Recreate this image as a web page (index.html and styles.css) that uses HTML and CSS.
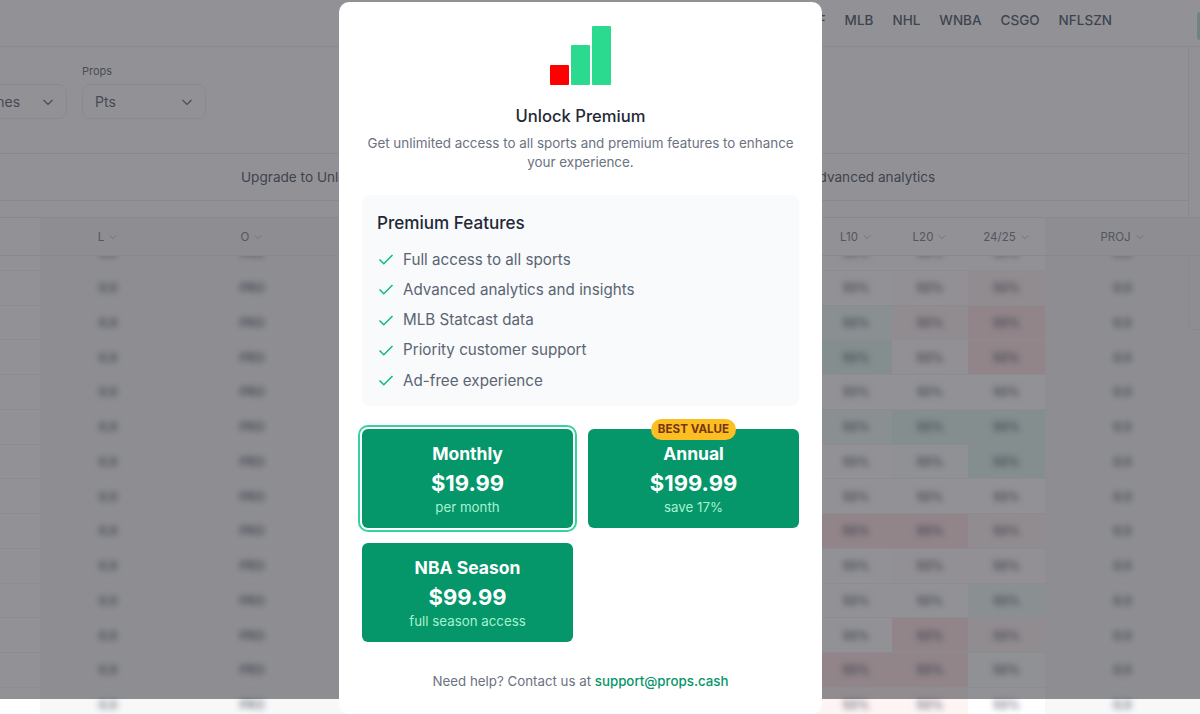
FILE: index.html
```html
<!DOCTYPE html>
<html lang="en">
<head>
  <meta charset="UTF-8">
  <meta name="viewport" content="width=device-width, initial-scale=1.0">
  <title>Unlock Premium</title>
  <link rel="stylesheet" href="styles.css">
</head>
<body>
  <div class="page">
    <header class="topbar">
      <nav class="sports">
        <a>NBA</a>
        <a>GOLF</a>
        <a>MLB</a>
        <a>NHL</a>
        <a>WNBA</a>
        <a>CSGO</a>
        <a>NFLSZN</a>
      </nav>
      <div class="account"></div>
    </header>

    <div class="filters">
      <div class="filter filter-lines">
        <div class="select">Lines <svg class="chev" viewBox="0 0 12 12"><path d="M1.5 4l4.5 4.5L10.500 4"/></svg></div>
      </div>
      <div class="filter">
        <label>Props</label>
        <div class="select">Pts <svg class="chev" viewBox="0 0 12 12"><path d="M1.5 4l4.5 4.5L10.500 4"/></svg></div>
      </div>
    </div>

    <div class="upgrade-banner">Upgrade to Unlock all sports, MLB Statcast data, player projections, hit rates, trends and advanced analytics</div>

    <div class="stats">
      <div class="stats-head">
        <div class="corner"></div>
        <div class="th shade">L <svg class="chev" viewBox="0 0 12 12"><path d="M2 4l4 4 4-4"/></svg></div>
        <div class="th shade">O <svg class="chev" viewBox="0 0 12 12"><path d="M2 4l4 4 4-4"/></svg></div>
        <div class="th shade"></div>
        <div class="th">L10 <svg class="chev" viewBox="0 0 12 12"><path d="M2 4l4 4 4-4"/></svg></div>
        <div class="th">L20 <svg class="chev" viewBox="0 0 12 12"><path d="M2 4l4 4 4-4"/></svg></div>
        <div class="th">24/25 <svg class="chev" viewBox="0 0 12 12"><path d="M2 4l4 4 4-4"/></svg></div>
        <div class="th shade">PROJ <svg class="chev" viewBox="0 0 12 12"><path d="M2 4l4 4 4-4"/></svg></div>
      </div>
      <div class="stats-body">
        <div class="row"><i></i><b class="shade">0.0</b><b class="shade">PRO</b><b class="shade"></b><b>50%</b><b>50%</b><b>50%</b><b class="shade">0.0</b></div>
        <div class="row"><i></i><b class="shade">0.0</b><b class="shade">PRO</b><b class="shade"></b><b>50%</b><b class="red-0">50%</b><b class="red-1">50%</b><b class="shade">0.0</b></div>
        <div class="row"><i></i><b class="shade">0.0</b><b class="shade">PRO</b><b class="shade"></b><b class="green-1">50%</b><b class="red-1">50%</b><b class="red-2">50%</b><b class="shade">0.0</b></div>
        <div class="row"><i></i><b class="shade">0.0</b><b class="shade">PRO</b><b class="shade"></b><b class="green-2">50%</b><b class="red-0">50%</b><b class="red-2">50%</b><b class="shade">0.0</b></div>
        <div class="row"><i></i><b class="shade">0.0</b><b class="shade">PRO</b><b class="shade"></b><b>50%</b><b>50%</b><b>50%</b><b class="shade">0.0</b></div>
        <div class="row"><i></i><b class="shade">0.0</b><b class="shade">PRO</b><b class="shade"></b><b class="green-1">50%</b><b class="green-2">50%</b><b class="green-2">50%</b><b class="shade">0.0</b></div>
        <div class="row"><i></i><b class="shade">0.0</b><b class="shade">PRO</b><b class="shade"></b><b>50%</b><b class="green-0">50%</b><b class="green-2">50%</b><b class="shade">0.0</b></div>
        <div class="row"><i></i><b class="shade">0.0</b><b class="shade">PRO</b><b class="shade"></b><b>50%</b><b>50%</b><b>50%</b><b class="shade">0.0</b></div>
        <div class="row"><i></i><b class="shade">0.0</b><b class="shade">PRO</b><b class="shade"></b><b class="red-2">50%</b><b class="red-2">50%</b><b class="red-1">50%</b><b class="shade">0.0</b></div>
        <div class="row"><i></i><b class="shade">0.0</b><b class="shade">PRO</b><b class="shade"></b><b>50%</b><b class="red-0">50%</b><b class="red-0">50%</b><b class="shade">0.0</b></div>
        <div class="row"><i></i><b class="shade">0.0</b><b class="shade">PRO</b><b class="shade"></b><b>50%</b><b>50%</b><b class="green-1">50%</b><b class="shade">0.0</b></div>
        <div class="row"><i></i><b class="shade">0.0</b><b class="shade">PRO</b><b class="shade"></b><b>50%</b><b class="red-2">50%</b><b class="red-1">50%</b><b class="shade">0.0</b></div>
        <div class="row"><i></i><b class="shade">0.0</b><b class="shade">PRO</b><b class="shade"></b><b class="red-2">50%</b><b class="red-2">50%</b><b class="green-0">50%</b><b class="shade">0.0</b></div>
        <div class="row"><i></i><b class="shade">0.0</b><b class="shade">PRO</b><b class="shade"></b><b class="red-1">50%</b><b class="red-1">50%</b><b>50%</b><b class="shade">0.0</b></div>
      </div>
    </div>

    <div class="side-panel"></div>
  </div>

  <div class="overlay"></div>

  <div class="modal-layer">
    <div class="modal">
      <svg class="logo" width="61" height="59" viewBox="0 0 61 59">
        <rect x="0" y="39" width="19" height="20" rx="1" fill="#ff0000"/>
        <rect x="21" y="19" width="19" height="40" rx="1" fill="#2bd98f"/>
        <rect x="42" y="0" width="19" height="59" rx="1" fill="#2bd98f"/>
      </svg>
      <h2 class="modal-title">Unlock Premium</h2>
      <p class="modal-text">Get unlimited access to all sports and premium features to enhance your experience.</p>

      <div class="features">
        <h3>Premium Features</h3>
        <ul>
          <li><svg class="check" viewBox="0 0 16 16"><path d="M1.500 8.500l4.300 4.300L14.500 4"/></svg>Full access to all sports</li>
          <li><svg class="check" viewBox="0 0 16 16"><path d="M1.500 8.500l4.300 4.300L14.500 4"/></svg>Advanced analytics and insights</li>
          <li><svg class="check" viewBox="0 0 16 16"><path d="M1.500 8.500l4.300 4.300L14.500 4"/></svg>MLB Statcast data</li>
          <li><svg class="check" viewBox="0 0 16 16"><path d="M1.500 8.500l4.300 4.300L14.500 4"/></svg>Priority customer support</li>
          <li><svg class="check" viewBox="0 0 16 16"><path d="M1.500 8.500l4.300 4.300L14.500 4"/></svg>Ad-free experience</li>
        </ul>
      </div>

      <div class="plans">
        <button class="plan selected">
          <span class="plan-name">Monthly</span>
          <span class="plan-price">$19.99</span>
          <span class="plan-note">per month</span>
        </button>
        <button class="plan">
          <span class="badge">BEST VALUE</span>
          <span class="plan-name">Annual</span>
          <span class="plan-price">$199.99</span>
          <span class="plan-note">save 17%</span>
        </button>
        <button class="plan">
          <span class="plan-name">NBA Season</span>
          <span class="plan-price">$99.99</span>
          <span class="plan-note">full season access</span>
        </button>
      </div>

      <p class="help">Need help? Contact us at <a href="#">support@props.cash</a></p>
    </div>
  </div>
</body>
</html>
```

FILE: styles.css
```css
* {
  box-sizing: border-box;
}

body {
  margin: 0;
  height: 714px;
  overflow: hidden;
  font-family: Inter, "Noto Sans", sans-serif;
  background-color: #ffffff;
  color: #1f2937;
}

.page {
  position: relative;
  z-index: 0;
  height: 714px;
  overflow: hidden;
}

.chev {
  fill: none;
  stroke: currentColor;
  stroke-width: 1.2;
}

/* top bar */
.topbar {
  height: 47px;
  display: flex;
  justify-content: flex-end;
  border-bottom: 1px solid #eef0f2;
  overflow: hidden;
}

.sports {
  display: flex;
  align-items: center;
  gap: 19px;
  height: 40px;
  font-size: 13.5px;
  font-weight: 500;
  color: #66707e;
  margin-right: 85px;
}

.account {
  width: 3px;
  height: 28px;
  margin-top: 12px;
  background-color: #bfe6d5;
  border-radius: 4px 0 0 4px;
}

/* filters */
.filters {
  height: 106px;
  width: 1188px;
  display: flex;
  align-items: flex-end;
  gap: 15px;
  padding-bottom: 34px;
}

.filter label {
  display: block;
  font-size: 11px;
  line-height: 14px;
  color: #7b818c;
  margin-bottom: 6px;
}

.filter-lines {
  margin-left: -28px;
}

.select {
  width: 124px;
  height: 35px;
  padding: 0 12px;
  display: flex;
  justify-content: space-between;
  align-items: center;
  border: 1px solid #eef0f2;
  border-radius: 8px;
  font-size: 14px;
  color: #737a87;
}

.filter-lines .select {
  width: 95px;
}

.select .chev {
  width: 12px;
  height: 12px;
}

.upgrade-banner {
  width: 1188px;
  height: 48px;
  border-top: 1px solid #eceef1;
  border-bottom: 1px solid #eceef1;
  padding-left: 241px;
  display: flex;
  align-items: center;
  font-size: 13.6px;
  color: #666d7a;
  white-space: nowrap;
}

/* stats table */
.stats {
  margin-top: 16px;
  border-top: 1px solid #eceef1;
}

.stats-head,
.row {
  display: grid;
  grid-template-columns: 40px 136px 152px 492px 72px 76px 77px 155px;
}

.stats-head {
  position: relative;
  z-index: 1;
  height: 38px;
  background-color: #ffffff;
  border-bottom: 1px solid #eceef1;
}

.th {
  display: flex;
  align-items: center;
  justify-content: center;
  gap: 4px;
  font-size: 11.5px;
  color: #8b9099;
}

.th .chev {
  width: 10px;
  height: 10px;
  color: #c7cad0;
}

.shade {
  background-color: #f7f8f8;
}

.stats-body {
  margin-top: -20px;
}

.row {
  height: 34.75px;
  border-bottom: 1px solid #f2f3f5;
}

.row b {
  display: flex;
  align-items: center;
  justify-content: center;
  font-size: 12px;
  font-weight: 500;
  color: transparent;
  text-shadow: 0 0 6px #5b6270;
}

.red-0 { background-color: rgba(239, 68, 68, 0.025); }
.red-1 { background-color: rgba(239, 68, 68, 0.06); }
.red-2 { background-color: rgba(239, 68, 68, 0.13); }
.green-0 { background-color: rgba(16, 185, 129, 0.025); }
.green-1 { background-color: rgba(16, 185, 129, 0.06); }
.green-2 { background-color: rgba(16, 185, 129, 0.11); }

.side-panel {
  position: absolute;
  top: 47px;
  left: 1188px;
  width: 30px;
  height: 283px;
  border-left: 1px solid #eceef1;
  border-bottom: 1px solid #eceef1;
  border-bottom-left-radius: 6px;
}

/* modal */
.overlay {
  position: fixed;
  z-index: 1;
  top: 0;
  left: 0;
  right: 0;
  height: 699px;
  background-color: rgba(17, 17, 27, 0.46);
}

.modal-layer {
  position: fixed;
  z-index: 2;
  inset: 0;
  padding: 2px 0 0 339px;
}

.modal {
  width: 483px;
  height: 712px;
  padding: 24px 23px 0;
  background-color: #ffffff;
  border-radius: 10px;
  display: flex;
  flex-direction: column;
  align-items: center;
}

.logo {
  display: block;
}

.modal-title {
  margin: 19px 0 0;
  font-size: 16.600px;
  line-height: 24px;
  font-weight: 500;
  color: #1f2937;
}

.modal-text {
  margin: 6px 0 0;
  width: 437px;
  text-align: center;
  font-size: 13.4px;
  line-height: 19px;
  color: #6b7280;
}

.features {
  align-self: stretch;
  height: 211px;
  margin-top: 23px;
  padding: 16px 15px 0;
  background-color: #f8fafc;
  border-radius: 8px;
}

.features h3 {
  margin: 0;
  font-size: 17.100px;
  line-height: 24px;
  font-weight: 500;
  color: #1f2937;
}

.features ul {
  list-style: none;
  margin: 9px 0 0;
  padding: 0;
}

.features li {
  display: flex;
  align-items: center;
  height: 30.250px;
  font-size: 15.200px;
  color: #5b6472;
}

.check {
  width: 16px;
  height: 16px;
  margin: 0 9px 0 1px;
  fill: none;
  stroke: #10b981;
  stroke-width: 1.500;
}

.plans {
  align-self: stretch;
  display: grid;
  grid-template-columns: 211px 211px;
  grid-auto-rows: 99px;
  column-gap: 15px;
  row-gap: 15px;
  margin-top: 23px;
}

.plan {
  position: relative;
  display: flex;
  flex-direction: column;
  align-items: center;
  padding: 14px 0 0;
  border: none;
  border-radius: 6px;
  background-color: #059669;
  color: #ffffff;
  font-family: inherit;
}

.plan.selected {
  box-shadow: 0 0 0 2px #ffffff, 0 0 0 4px #34d399;
}

.plan-name {
  font-size: 17.500px;
  line-height: 22px;
  font-weight: 700;
}

.plan-price {
  font-size: 22px;
  line-height: 32px;
  font-weight: 700;
  margin-top: 2px;
}

.plan-note {
  font-size: 13.300px;
  line-height: 17px;
  color: #a7f3d0;
}

.badge {
  position: absolute;
  top: -10px;
  left: 63px;
  width: 85px;
  height: 21px;
  border-radius: 11px;
  background-color: #fbbf24;
  color: #78350f;
  font-size: 11.600px;
  font-weight: 700;
  line-height: 21px;
  white-space: nowrap;
}

.help {
  margin: 29px 0 0;
  font-size: 13.300px;
  line-height: 20px;
  color: #6b7280;
}

.help a {
  color: #059669;
  text-decoration: none;
  font-weight: 500;
}
```
